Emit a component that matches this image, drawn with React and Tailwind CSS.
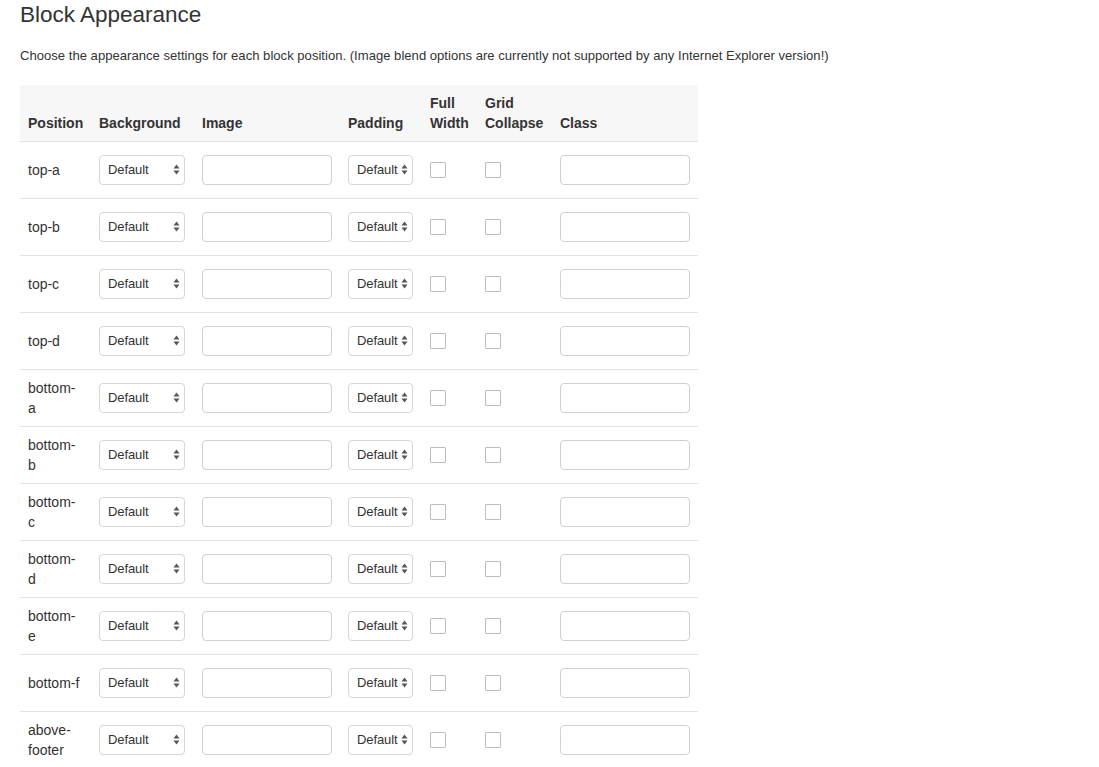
import React from "react";

const rows = [
  ["top-a"],
  ["top-b"],
  ["top-c"],
  ["top-d"],
  ["bottom-", "a"],
  ["bottom-", "b"],
  ["bottom-", "c"],
  ["bottom-", "d"],
  ["bottom-", "e"],
  ["bottom-f"],
  ["above-", "footer"],
];

function Arrows() {
  return (
    <svg width="7" height="11" viewBox="0 0 7 11" className="shrink-0">
      <polygon points="0.5,4.5 3.5,0.5 6.5,4.5" fill="#555" />
      <polygon points="0.5,6.5 6.5,6.5 3.5,10.5" fill="#555" />
    </svg>
  );
}

function FakeSelect({ width }) {
  return (
    <div
      className={`${width} h-[30px] flex items-center justify-between gap-[3px] pl-[8px] pr-[4px] bg-white border border-[#d6d6d6] rounded-[4px] text-[13px] text-[#333]`}
    >
      <span className="tracking-[-0.1px]">Default</span>
      <Arrows />
    </div>
  );
}

function Input() {
  return <div className="w-[130px] h-[30px] bg-white border border-[#d0d0d0] rounded-[4px]" />;
}

function Check() {
  return <div className="w-[16px] h-[16px] bg-white border border-[#bdbdbd] rounded-[1px]" />;
}

export default function App() {
  return (
    <div
      className="bg-white min-h-screen pl-[20px] text-[#333]"
      style={{ fontFamily: '"Liberation Sans", Arial, sans-serif' }}
    >
      <h1 className="pt-[1px] text-[22.5px] leading-[27px] font-normal text-[#333]">Block Appearance</h1>
      <p className="mt-[18px] text-[13.1px] leading-[20px]">
        Choose the appearance settings for each block position. (Image blend options are currently not supported by any Internet Explorer version!)
      </p>
      <table className="mt-[19px] w-[678px] table-fixed border-collapse text-[14px]">
        <colgroup>
          <col className="w-[71px]" />
          <col className="w-[103px]" />
          <col className="w-[146px]" />
          <col className="w-[82px]" />
          <col className="w-[55px]" />
          <col className="w-[75px]" />
          <col className="w-[146px]" />
        </colgroup>
        <thead>
          <tr className="bg-[#f7f7f7] h-[56px]">
            <th className="px-2 pb-[8px] align-bottom text-left font-bold leading-[20px]">Position</th>
            <th className="px-2 pb-[8px] align-bottom text-left font-bold leading-[20px]">Background</th>
            <th className="px-2 pb-[8px] align-bottom text-left font-bold leading-[20px]">Image</th>
            <th className="px-2 pb-[8px] align-bottom text-left font-bold leading-[20px]">Padding</th>
            <th className="px-2 pb-[8px] align-bottom text-left font-bold leading-[20px]">
              Full<br />Width
            </th>
            <th className="px-2 pb-[8px] align-bottom text-left font-bold leading-[20px]">
              Grid<br />Collapse
            </th>
            <th className="px-2 pb-[8px] align-bottom text-left font-bold leading-[20px]">Class</th>
          </tr>
        </thead>
        <tbody>
          {rows.map((r, i) => (
            <tr key={i} className="border-t border-[#e3e3e3] h-[57px]">
              <td className="px-2 align-middle leading-[20px]">
                {r.length === 2 ? (
                  <>
                    {r[0]}
                    <br />
                    {r[1]}
                  </>
                ) : (
                  r[0]
                )}
              </td>
              <td className="px-2 align-middle">
                <FakeSelect width="w-[86px]" />
              </td>
              <td className="px-2 align-middle">
                <Input />
              </td>
              <td className="px-2 align-middle">
                <FakeSelect width="w-[65px]" />
              </td>
              <td className="px-2 align-middle">
                <Check />
              </td>
              <td className="px-2 align-middle">
                <Check />
              </td>
              <td className="px-2 align-middle">
                <Input />
              </td>
            </tr>
          ))}
        </tbody>
      </table>
    </div>
  );
}
